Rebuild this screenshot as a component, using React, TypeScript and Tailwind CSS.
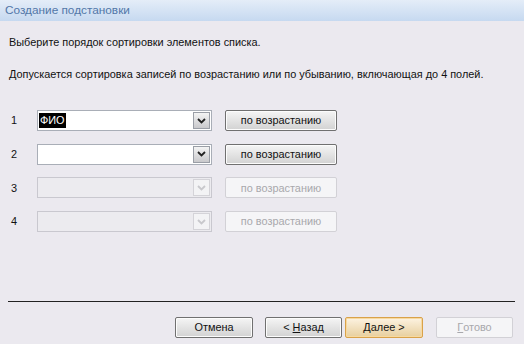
import React from 'react';

const font = { fontFamily: '"Liberation Sans", Arial, sans-serif' };

const Chevron: React.FC<{ disabled?: boolean }> = ({ disabled }) => (
  <svg width="9" height="6" viewBox="0 0 9 6">
    <path d="M1 1 L4.5 4.5 L8 1" fill="none" stroke={disabled ? '#c8c8cc' : '#222'} strokeWidth="1.8" />
  </svg>
);

const Combo: React.FC<{ value?: string; disabled?: boolean }> = ({ value, disabled }) => (
  <div
    className={`flex h-[21px] w-[175px] items-stretch border p-[1px] ${
      disabled ? 'border-[#c9c8cf] bg-[#ecebef]' : 'border-[#a9aeb7] bg-white'
    }`}
  >
    <div className="flex flex-1 items-center">
      {value && <span className="bg-black px-[1px] leading-[15px] text-white">{value}</span>}
    </div>
    <div
      className={`flex w-[17px] items-center justify-center border ${
        disabled
          ? 'border-[#d4d3d8] bg-[#f3f3f5]'
          : 'border-[#9a9ea6] bg-gradient-to-b from-[#f4f4f4] to-[#c9c9cc]'
      }`}
    >
      <Chevron disabled={disabled} />
    </div>
  </div>
);

const Btn: React.FC<{ children: React.ReactNode; disabled?: boolean; def?: boolean; w?: string }> = ({
  children,
  disabled,
  def,
  w = 'w-[112px]',
}) => (
  <div
    className={`flex h-[21px] ${w} items-center justify-center whitespace-pre rounded-[2px] border ${
      disabled
        ? 'border-[#d2d1d6] bg-[#f5f5f7] text-[#a8a8ac]'
        : def
        ? 'border-[#d9a24a] bg-gradient-to-b from-[#fdf3e1] to-[#e7cf9e] text-[#111] shadow-[inset_0_0_0_1px_#f7d9a0]'
        : 'border-[#707070] bg-gradient-to-b from-[#f5f5f5] to-[#d2d2d2] text-[#111] shadow-[inset_0_0_0_1px_#fcfcfc]'
    }`}
  >
    {children}
  </div>
);

const rows = [
  { n: '1', value: 'ФИО', disabled: false },
  { n: '2', value: '', disabled: false },
  { n: '3', value: '', disabled: true },
  { n: '4', value: '', disabled: true },
];

export default function App() {
  return (
    <div className="flex h-[344px] w-[524px] flex-col bg-[#ebe9ef] text-[10.9px] text-[#111]" style={font}>
      <div className="flex h-[21px] items-center bg-gradient-to-b from-[#e4edf8] to-[#c6d9f0] pl-[5px] text-[11.8px] text-[#5277a8]">
        Создание подстановки
      </div>

      <div className="pl-[9px] pt-[14px] leading-[14px]">Выберите порядок сортировки элементов списка.</div>
      <div className="whitespace-nowrap pl-[9px] pt-[18px] leading-[14px]">
        Допускается сортировка записей по возрастанию или по убыванию, включающая до 4 полей.
      </div>

      <div className="flex flex-col gap-[12.7px] pt-[29px]">
        {rows.map((r) => (
          <div key={r.n} className="flex items-center">
            <span className="w-[37px] pl-[11px]">{r.n}</span>
            <Combo value={r.value} disabled={r.disabled} />
            <div className="ml-[13px]">
              <Btn disabled={r.disabled}>по возрастанию</Btn>
            </div>
          </div>
        ))}
      </div>

      <div className="flex-1" />

      <div className="mx-[8px] mr-[9px] border-t border-[#222]" />

      <div className="flex items-center pb-[6px] pl-[175px] pt-[15px]">
        <Btn w="w-[78px]">Отмена</Btn>
        <div className="ml-[12px]">
          <Btn w="w-[77px]">
            {'< '}
            <span className="underline">Н</span>азад
          </Btn>
        </div>
        <div className="ml-[3px]">
          <Btn w="w-[78px]" def>
            <span className="underline">Д</span>
            {'алее >'}
          </Btn>
        </div>
        <div className="ml-[13px]">
          <Btn w="w-[77px]" disabled>
            <span className="underline">Г</span>отово
          </Btn>
        </div>
      </div>
    </div>
  );
}
